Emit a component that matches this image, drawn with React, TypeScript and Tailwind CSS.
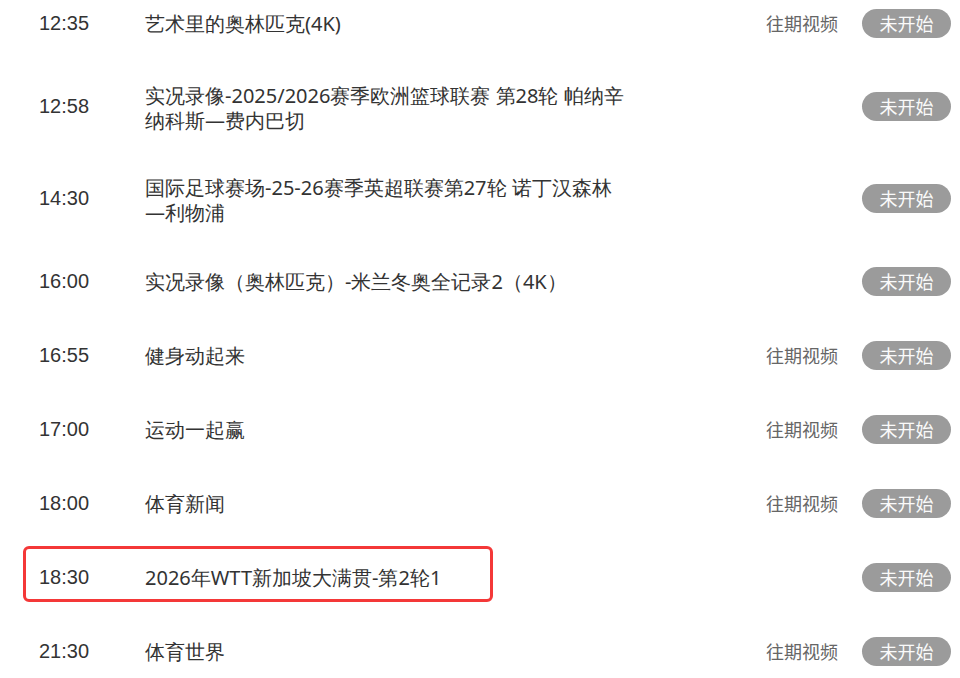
import React from 'react';

type Item = {
  time: string;
  title: string;
  replay?: boolean;
  tall?: boolean;
  marked?: boolean;
};

const ITEMS: Item[] = [
  { time: '12:35', title: '艺术里的奥林匹克(4K)', replay: true },
  { time: '12:58', title: '实况录像-2025/2026赛季欧洲篮球联赛 第28轮 帕纳辛纳科斯—费内巴切', tall: true },
  { time: '14:30', title: '国际足球赛场-25-26赛季英超联赛第27轮 诺丁汉森林—利物浦', tall: true },
  { time: '16:00', title: '实况录像（奥林匹克）-米兰冬奥全记录2（4K）' },
  { time: '16:55', title: '健身动起来', replay: true },
  { time: '17:00', title: '运动一起赢', replay: true },
  { time: '18:00', title: '体育新闻', replay: true },
  { time: '18:30', title: '2026年WTT新加坡大满贯-第2轮1', marked: true },
  { time: '21:30', title: '体育世界', replay: true },
];

export default function App() {
  return (
    <div className="w-[960px] h-[678px] overflow-hidden bg-white">
      <ul className="-mt-[14px]">
        {ITEMS.map(item => (
          <li
            key={item.time}
            className={
              'relative flex items-center pl-[39px] pr-[9px] ' +
              (item.tall ? 'h-[92px]' : 'h-[74px]')
            }
          >
            <span className="w-[106px] shrink-0 text-[20px] text-[#333] font-['Liberation_Sans',Arial,sans-serif]">
              {item.time}
            </span>
            <span
              className={
                'w-[485px] shrink-0 text-[20px] leading-[25px] text-[#333] font-[\'Noto_Sans\',\'Noto_Sans_CJK_SC\',sans-serif] ' +
                (item.tall ? 'pt-[3px]' : '')
              }
            >
              {item.title}
            </span>
            <div className="flex flex-1 items-center justify-end">
              {item.replay && (
                <span className="mr-[24px] text-[18px] text-[#666] font-['Noto_Sans_CJK_SC',sans-serif]">
                  往期视频
                </span>
              )}
              <span className="flex h-[29px] w-[89px] items-center justify-center rounded-full bg-[#9b9b9b] text-[18px] text-[#fafafa] font-['Noto_Sans_CJK_SC',sans-serif]">
                未开始
              </span>
            </div>
            {item.marked && (
              <div className="absolute left-[23px] top-[6px] h-[56px] w-[470px] rounded-[6px] border-[3px] border-[#f43838]" />
            )}
          </li>
        ))}
      </ul>
    </div>
  );
}
